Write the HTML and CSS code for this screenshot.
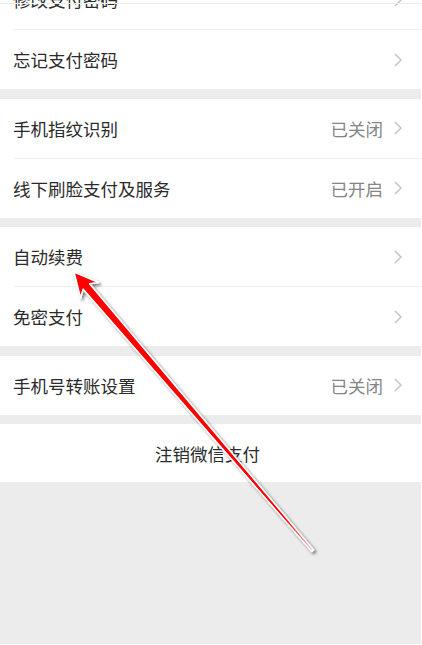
FILE: index.html
```html
<!DOCTYPE html>
<html lang="zh">
<head>
<meta charset="utf-8">
<title>支付设置</title>
<link rel="stylesheet" href="styles.css">
</head>
<body>
<div class="page">
  <div class="topline"></div>
  <div class="group first">
    <div class="row"><span class="label">修改支付密码</span><span class="right"><svg class="chev" viewBox="0 0 8 14"><polyline points="1,1 7,7 1,13"/></svg></span></div>
    <div class="row"><span class="label">忘记支付密码</span><span class="right"><svg class="chev" viewBox="0 0 8 14"><polyline points="1,1 7,7 1,13"/></svg></span></div>
  </div>
  <div class="group">
    <div class="row"><span class="label">手机指纹识别</span><span class="right"><span class="value">已关闭</span><svg class="chev" viewBox="0 0 8 14"><polyline points="1,1 7,7 1,13"/></svg></span></div>
    <div class="row"><span class="label">线下刷脸支付及服务</span><span class="right"><span class="value">已开启</span><svg class="chev" viewBox="0 0 8 14"><polyline points="1,1 7,7 1,13"/></svg></span></div>
  </div>
  <div class="group">
    <div class="row"><span class="label">自动续费</span><span class="right"><svg class="chev" viewBox="0 0 8 14"><polyline points="1,1 7,7 1,13"/></svg></span></div>
    <div class="row"><span class="label">免密支付</span><span class="right"><svg class="chev" viewBox="0 0 8 14"><polyline points="1,1 7,7 1,13"/></svg></span></div>
  </div>
  <div class="group">
    <div class="row"><span class="label">手机号转账设置</span><span class="right"><span class="value">已关闭</span><svg class="chev" viewBox="0 0 8 14"><polyline points="1,1 7,7 1,13"/></svg></span></div>
  </div>
  <div class="group">
    <div class="row center"><span class="label">注销微信支付</span></div>
  </div>
  <div class="fill"></div>
</div>
<svg class="arrow" width="422" height="645" viewBox="0 0 422 645">
  <defs>
    <filter id="sh" x="-20%" y="-20%" width="140%" height="140%">
      <feGaussianBlur in="SourceAlpha" stdDeviation="1.6"/>
      <feOffset dx="1.5" dy="1.5" result="b"/>
      <feComponentTransfer><feFuncA type="linear" slope="0.55"/></feComponentTransfer>
      <feMerge><feMergeNode/><feMergeNode in="SourceGraphic"/></feMerge>
    </filter>
    <linearGradient id="g" x1="89" y1="286" x2="313" y2="551" gradientUnits="userSpaceOnUse">
      <stop offset="0" stop-color="#ff0000"/>
      <stop offset="0.88" stop-color="#ff0000"/>
      <stop offset="1" stop-color="#ffb8b8"/>
    </linearGradient>
  </defs>
  <polygon filter="url(#sh)" fill="url(#g)" stroke="#ffffff" stroke-width="1.6" stroke-linejoin="round"
    points="74,272 98.7,282.4 89.6,283.7 313.6,549.9 311.8,551.5 83.2,289.2 80.5,298"/>
</svg>
</body>
</html>
```

FILE: styles.css
```css
html, body {
  margin: 0;
  padding: 0;
  background: #ffffff;
}
body {
  width: 422px;
  height: 645px;
  overflow: hidden;
  position: relative;
  font-family: "Noto Sans CJK SC", "Noto Sans", sans-serif;
}
.page {
  width: 421px;
  height: 644px;
  background: #ececec;
  display: flex;
  flex-direction: column;
  gap: 9.5px;
  overflow: hidden;
}
.topline {
  height: 3px;
  border-bottom: 1px solid #ececec;
  background: transparent;
  position: relative;
  z-index: 1;
  flex: none;
  margin-bottom: -9.5px;
}
.group {
  background: #ffffff;
  padding-left: 13px;
  flex: none;
}
.group.first {
  margin-top: -34px;
}
.row {
  height: 59px;
  display: flex;
  align-items: center;
  justify-content: space-between;
  padding-right: 19px;
  font-size: 17.5px;
  color: #2b2b2b;
}
.row + .row {
  border-top: 1px solid #efefef;
}
.row.center {
  justify-content: center;
  padding-right: 19px;
  height: 58px;
}
.right {
  display: flex;
  align-items: center;
  gap: 11px;
}
.value {
  color: #858585;
}
.chev {
  width: 8px;
  height: 14px;
  display: block;
  fill: none;
  stroke: #c4c4c4;
  stroke-width: 1.5;
}
.fill {
  flex: 1;
}
.arrow {
  position: absolute;
  left: 0;
  top: 0;
  pointer-events: none;
}
```
